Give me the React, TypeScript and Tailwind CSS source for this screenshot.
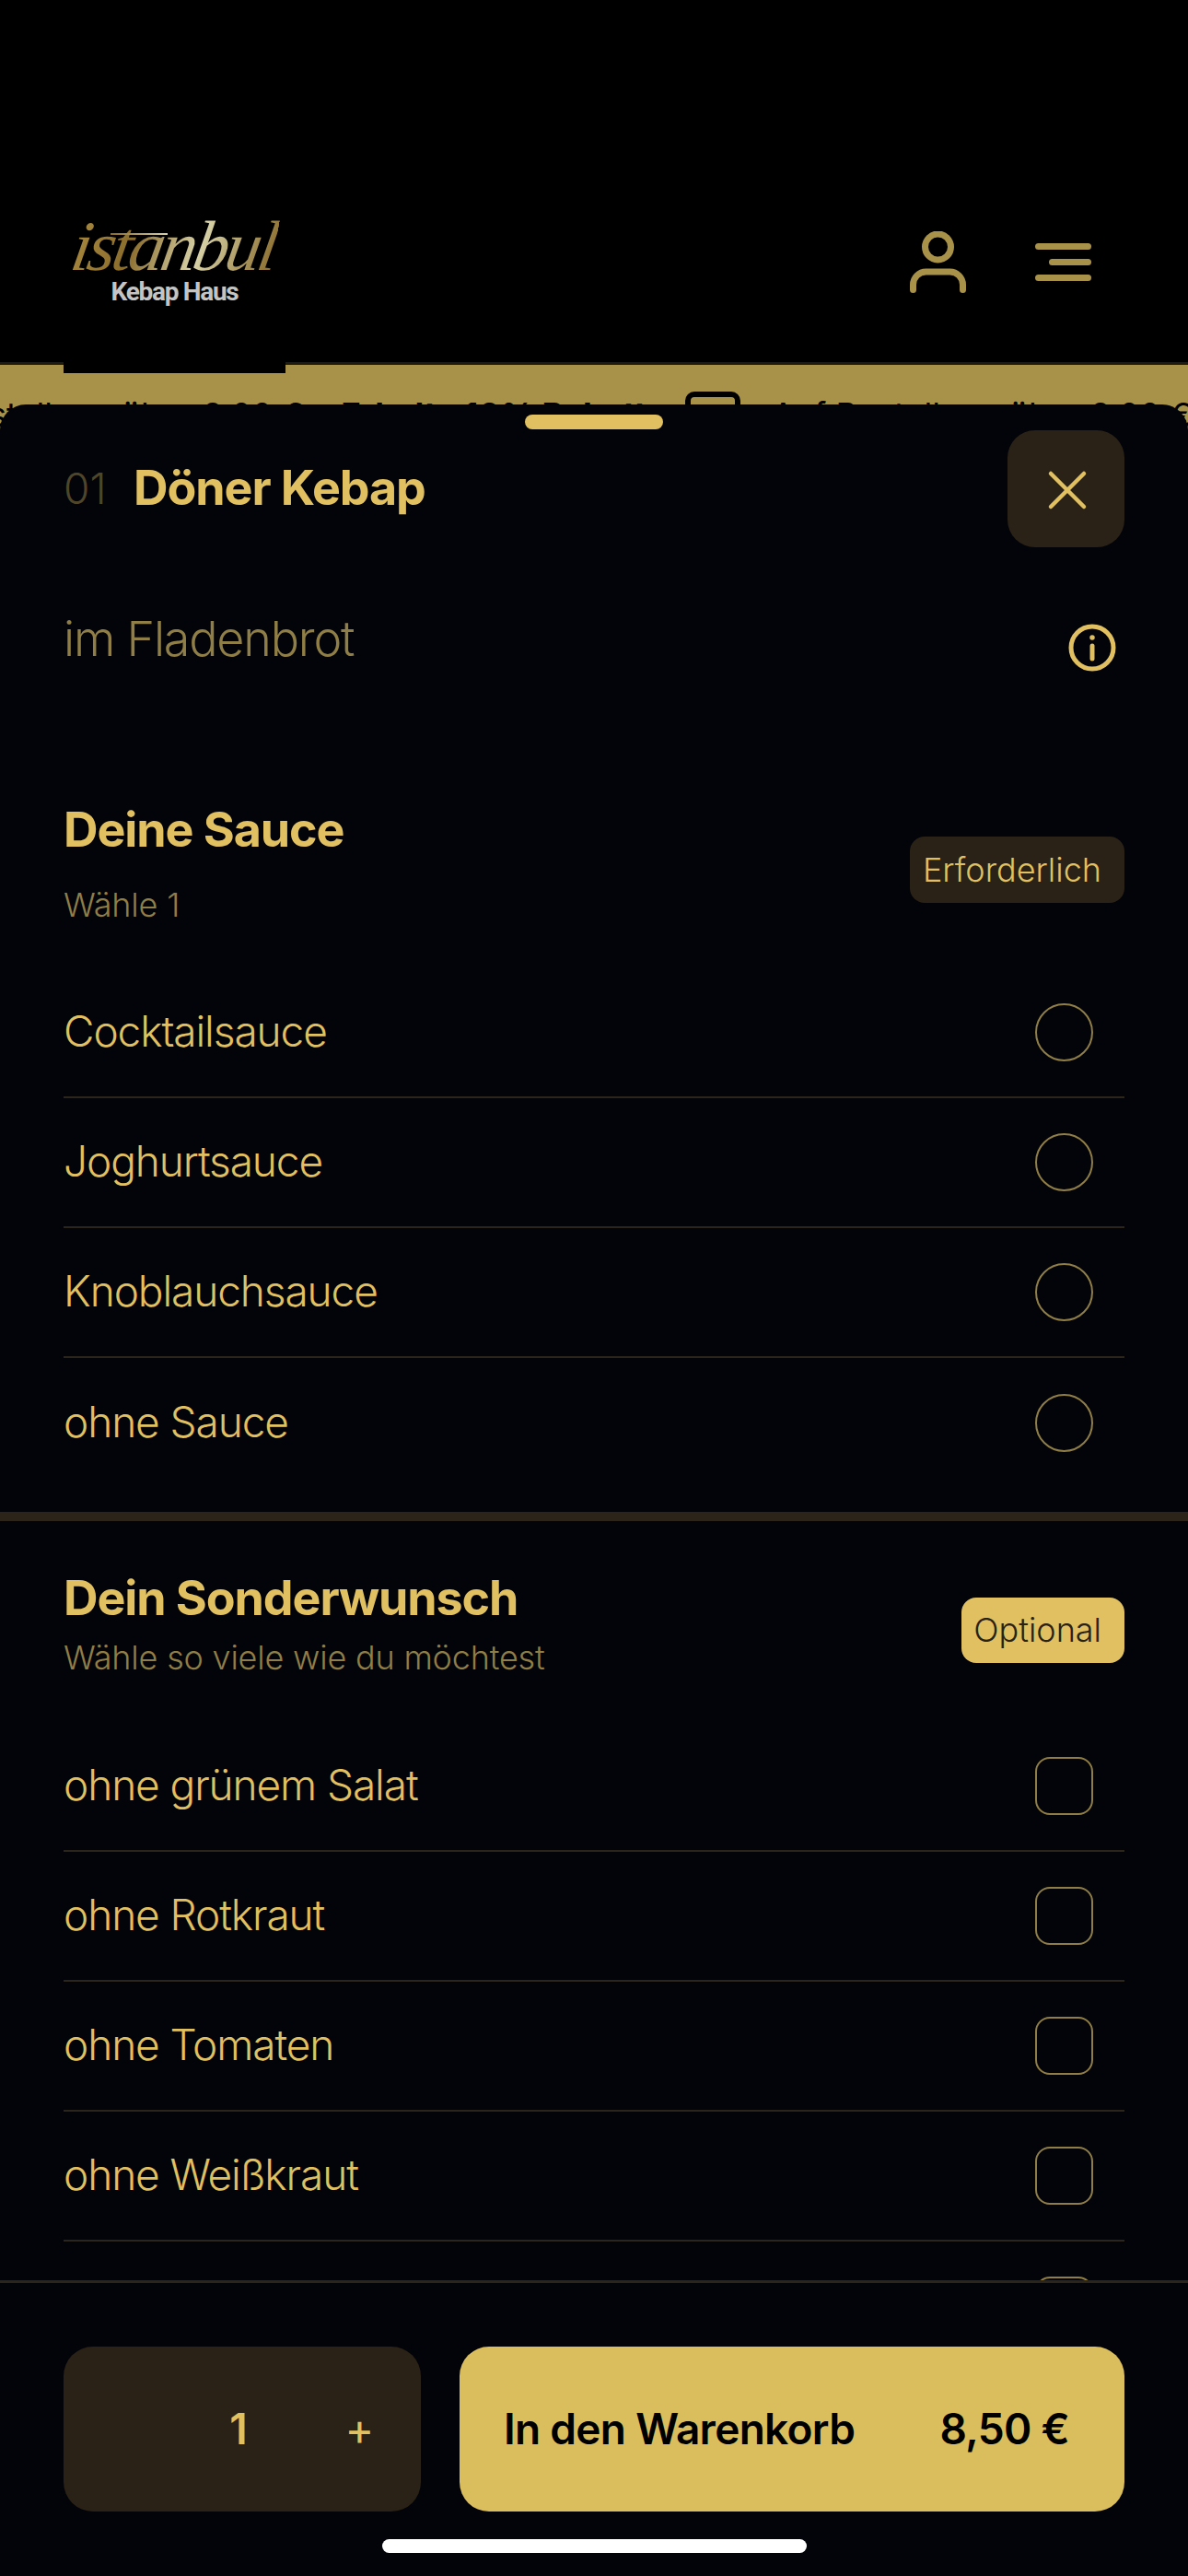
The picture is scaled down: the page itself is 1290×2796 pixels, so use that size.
import { X } from 'lucide-react'

const sauces = ['Cocktailsauce', 'Joghurtsauce', 'Knoblauchsauce', 'ohne Sauce']
const extras = ['ohne grünem Salat', 'ohne Rotkraut', 'ohne Tomaten', 'ohne Weißkraut', 'ohne Zwiebeln']

function Logo() {
    return (
        <div className="w-[241px] h-[181px] bg-black relative z-10 flex flex-col items-center">
            <span className="mt-[8px] h-[70px] text-[77px] leading-[70px] font-['Liberation_Serif',serif] italic tracking-[-3.5px] -skew-x-[10deg] bg-[linear-gradient(100deg,#a9893f_0%,#8a6c2c_30%,#d8d2a8_62%,#8a6c2c_100%)] bg-clip-text text-transparent">
                istanbul
            </span>
            {/* t crossbar swash */}
            <span className="absolute left-[51px] top-[29px] h-[2px] w-[62px] bg-gradient-to-r from-[#8a6c2c] to-[#d8d2a8]" />
            <span className="-mt-[3px] text-[28px] leading-[36px] font-bold font-[Roboto,sans-serif] tracking-[-1.3px] text-[#c4c4c4]">
                Kebap Haus
            </span>
        </div>
    )
}

function UserIcon() {
    return (
        <svg width="61" height="67" viewBox="0 0 61 67" fill="none" stroke="#a8924a" strokeWidth="7" strokeLinecap="round">
            <circle cx="30.5" cy="17" r="14" />
            <path d="M3.5 63.5V58a14 14 0 0 1 14-14h26a14 14 0 0 1 14 14v5.5" />
        </svg>
    )
}

function MenuIcon() {
    return (
        <div className="flex flex-col items-end gap-[10px] w-[61px]">
            <span className="block h-[7px] w-full rounded-full bg-[#a8924a]" />
            <span className="block h-[7px] w-[46px] rounded-full bg-[#a8924a]" />
            <span className="block h-[7px] w-full rounded-full bg-[#a8924a]" />
        </div>
    )
}

function InfoIcon() {
    return (
        <svg width="52" height="52" viewBox="0 0 52 52" fill="none" stroke="#e0c060" strokeWidth="5" strokeLinecap="round">
            <circle cx="26" cy="26" r="23" />
            <path d="M26 24v14" />
            <circle cx="26" cy="15" r="2" fill="#e0c060" strokeWidth="1.5" />
        </svg>
    )
}

function PromoStrip() {
    return (
        <div className="flex items-start whitespace-nowrap text-[36px] leading-[46px] text-black -ml-[126px] mt-[31px]">
            <span>Auf Bestellung über 8,00 €</span>
            <span className="ml-[40px] font-bold">Erhalte 10% Rabatt</span>
            <span className="ml-[42px] w-[60px] h-[60px] -mt-[2px] rounded-[10px] border-[6px] border-black shrink-0" />
            <span className="ml-[34px]">Auf Bestellung über 8,00 €</span>
        </div>
    )
}

function Row({ label, round, last }: { label: string; round?: boolean; last?: boolean }) {
    return (
        <div className={`h-[141px] flex items-center justify-between ${last ? '' : 'border-b-2 border-[#2c261a]'}`}>
            <span className="pb-[3px] text-[46px] tracking-[-1.1px] font-light text-[#e0c060]">{label}</span>
            {round ? (
                <span className="w-[63px] h-[63px] mr-[34px] rounded-full border-2 border-[#8f7e45]" />
            ) : (
                <span className="w-[63px] h-[63px] mr-[34px] rounded-[16px] border-2 border-[#8f7e45]" />
            )}
        </div>
    )
}

export default function App() {
    return (
        <div className="relative w-[1290px] h-[2796px] overflow-hidden bg-black font-[Inter,sans-serif]">
            {/* Site header */}
            <header className="h-[393px] flex items-start justify-between pl-[69px] pr-[105px] pt-[224px]">
                <Logo />
                <div className="flex items-center gap-[75px] pt-[27px]">
                    <UserIcon />
                    <MenuIcon />
                </div>
            </header>
            <div className="h-[106px] border-t-[3px] border-[#1f1b10] bg-[#a8924a] overflow-hidden">
                <PromoStrip />
            </div>

            {/* Product options sheet */}
            <div className="absolute inset-x-0 top-[439px] bottom-0 z-20 flex flex-col rounded-t-[28px] bg-[#03030a]">
                <div className="flex-1 min-h-0 overflow-hidden">
                    <div className="mt-[11px] mx-auto h-[16px] w-[150px] rounded-full bg-[#e0c060]" />
                    <div className="mt-[1px] px-[69px] flex items-center justify-between h-[127px]">
                        <div className="flex items-center">
                            <span className="w-[76px] text-[46px] font-light text-[#4f4528]">01</span>
                            <h1 className="pb-[2px] text-[52px] font-bold text-[#e0c060] tracking-[-1.1px]">Döner Kebap</h1>
                        </div>
                        <button className="w-[127px] h-[127px] pl-[3px] pt-[3px] rounded-[30px] bg-[#2a2216] flex items-center justify-center">
                            <X className="w-[72px] h-[72px] text-[#e0c060]" strokeWidth={1.5} />
                        </button>
                    </div>

                    <div className="mt-[70px] pl-[69px] pr-[78px] flex items-start justify-between">
                        <p className="text-[52px] leading-[60px] tracking-[-1.2px] font-light text-[#8f7e45]">im Fladenbrot</p>
                        <div className="mt-[13px]"><InfoIcon /></div>
                    </div>

                    <section className="mt-[142px] px-[69px]">
                        <div className="flex items-start justify-between">
                            <div>
                                <h2 className="text-[52px] leading-[60px] font-bold text-[#e0c060] tracking-[-1.1px]">Deine Sauce</h2>
                                <p className="mt-[29px] text-[36px] leading-[44px] tracking-[-0.2px] font-light text-[#8f7e45]">Wähle 1</p>
                            </div>
                            <span className="mt-[37px] h-[72px] pl-[14px] pr-[25px] rounded-[16px] bg-[#2a2216] flex items-center text-[36px] font-light text-[#e0c060]">
                                Erforderlich
                            </span>
                        </div>
                        <div className="mt-[47px]">
                            {sauces.map((s, i) => (
                                <Row key={s} label={s} round last={i === sauces.length - 1} />
                            ))}
                        </div>
                    </section>

                    <div className="mt-[26px] h-[10px] bg-[#2c2418]" />

                    <section className="mt-[54px] px-[69px]">
                        <div className="flex items-start justify-between">
                            <div>
                                <h2 className="text-[52px] leading-[60px] font-bold text-[#e0c060] tracking-[-1.1px]">Dein Sonderwunsch</h2>
                                <p className="mt-[12px] text-[36px] leading-[44px] tracking-[-0.2px] font-light text-[#8f7e45]">Wähle so viele wie du möchtest</p>
                            </div>
                            <span className="mt-[29px] h-[71px] pb-[1px] pl-[13px] pr-[25px] rounded-[16px] bg-[#e0c060] flex items-center text-[36px] font-light text-[#2a2216]">
                                Optional
                            </span>
                        </div>
                        <div className="mt-[48px]">
                            {extras.map(s => (
                                <Row key={s} label={s} />
                            ))}
                        </div>
                    </section>
                </div>

                {/* Quantity and add to cart */}
                <footer className="h-[321px] shrink-0 border-t-[3px] border-[#2c261a] pt-[69px]">
                    <div className="px-[69px] flex gap-[42px] h-[179px]">
                        <div className="w-[388px] rounded-[32px] bg-[#2a2216] grid grid-cols-[125px_130px_133px] items-center">
                            <span />
                            <span className="text-center text-[46px] font-semibold text-[#e0c060]">1</span>
                            <span className="text-center text-[48px] font-normal text-[#e0c060]">+</span>
                        </div>
                        <button className="flex-1 rounded-[32px] bg-[#dabe5e] flex items-center justify-between pl-[48px] pr-[60px] text-[46px] tracking-[-0.7px] font-semibold text-black">
                            <span>In den Warenkorb</span>
                            <span>8,50 €</span>
                        </button>
                    </div>
                    <div className="mt-[30px] mx-auto h-[15px] w-[461px] rounded-full bg-white" />
                </footer>
            </div>
        </div>
    )
}
